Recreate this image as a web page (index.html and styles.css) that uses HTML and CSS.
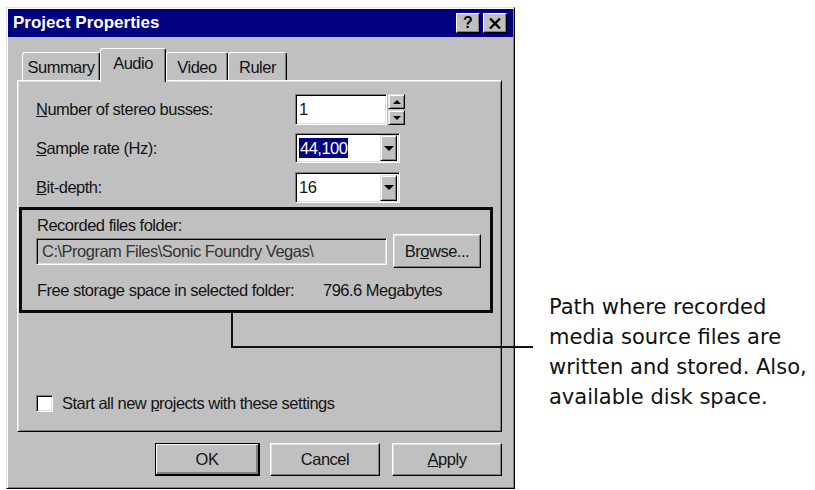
FILE: index.html
```html
<!DOCTYPE html>
<html>
<head>
<meta charset="utf-8">
<title>Project Properties</title>
<link rel="stylesheet" href="styles.css">
</head>
<body>
<div class="page">
  <div class="dialog">
    <div class="titlebar">
      <span class="title">Project Properties</span>
      <div class="tb-btns">
        <span class="tb-btn help">?</span>
        <span class="tb-btn close"><svg width="12" height="11" viewBox="0 0 12 11"><path d="M1 0.5 L11 10.5 M11 0.5 L1 10.5" stroke="#000" stroke-width="2.4"/></svg></span>
      </div>
    </div>
    <div class="tabs">
      <div class="tab">Summary</div>
      <div class="tab active">Audio</div>
      <div class="tab">Video</div>
      <div class="tab">Ruler</div>
    </div>
    <div class="panel">
      <div class="row r1">
        <span class="lbl"><u>N</u>umber of stereo busses:</span>
        <div class="field num"><span class="val">1</span></div>
        <div class="spin"><span class="spin-btn"><i class="tri up"></i></span><span class="spin-btn"><i class="tri down"></i></span></div>
      </div>
      <div class="row r2">
        <span class="lbl"><u>S</u>ample rate (Hz):</span>
        <div class="field combo"><span class="val sel">44,100</span><span class="drop"><i class="tri down big"></i></span></div>
      </div>
      <div class="row r3">
        <span class="lbl"><u>B</u>it-depth:</span>
        <div class="field combo"><span class="val">16</span><span class="drop"><i class="tri down big"></i></span></div>
      </div>
      <div class="group">
        <div class="g-label">Recorded files folder:</div>
        <div class="path-row">
          <div class="path">C:\Program Files\Sonic Foundry Vegas\</div>
          <div class="btn browse">Br<u>o</u>wse...</div>
        </div>
        <div class="free"><span class="free-lbl">Free storage space in selected folder:</span><span>796.6 Megabytes</span></div>
      </div>
      <div class="check-row">
        <span class="checkbox"></span>
        <span class="check-lbl">Start all new <u>p</u>rojects with these settings</span>
      </div>
    </div>
    <div class="buttons">
      <div class="btn ok default">OK</div>
      <div class="btn cancel">Cancel</div>
      <div class="btn apply"><u>A</u>pply</div>
    </div>
  </div>
  <div class="note">Path where recorded<br>media source files are<br>written and stored. Also,<br>available disk space.</div>
  <div class="callout"></div>
</div>
</body>
</html>
```
FILE: styles.css
```css
* { box-sizing: border-box; }
html, body { margin: 0; padding: 0; background: #fff; }
body { width: 815px; height: 490px; overflow: hidden; }

.page {
  position: relative;
  display: flex;
  align-items: flex-start;
  padding: 7px 0 0 6px;
  font-family: "Liberation Sans", Arial, sans-serif;
  font-size: 16.5px;
  letter-spacing: -0.5px;
  color: #141414;
}

.dialog {
  width: 509px;
  height: 482px;
  background: #c0c0c0;
  border: 1px solid;
  border-color: #dfdfdf #000 #000 #dfdfdf;
  box-shadow: inset 1px 1px #fff, inset -1px -1px #808080;
  padding: 1px;
  display: flex;
  flex-direction: column;
}

.titlebar {
  height: 28px;
  background: #000080;
  display: flex;
  align-items: center;
  justify-content: space-between;
  padding: 0 6px 0 5px;
}
.title {
  color: #fff;
  font-weight: bold;
  font-size: 17px;
  letter-spacing: 0;
}
.tb-btns { display: flex; gap: 3px; }
.tb-btn {
  width: 24px;
  height: 20px;
  background: #c0c0c0;
  border: 1px solid;
  border-color: #fff #000 #000 #fff;
  box-shadow: inset -1px -1px #808080;
  display: flex;
  align-items: center;
  justify-content: center;
  font-weight: bold;
  font-size: 16px;
  letter-spacing: 0;
  color: #000;
  line-height: 1;
}

.tabs {
  margin-top: 11px;
  height: 32px;
  padding-left: 14px;
  display: flex;
  align-items: flex-end;
  position: relative;
  z-index: 1;
}
.tab {
  height: 28px;
  border: 1px solid;
  border-color: #fff #000 transparent #fff;
  border-bottom: none;
  border-radius: 3px 3px 0 0;
  box-shadow: inset -1px 0 #808080;
  display: flex;
  align-items: center;
  justify-content: center;
  padding-top: 1px;
}
.tab:nth-child(1) { width: 78px; }
.tab:nth-child(3) { width: 62px; }
.tab:nth-child(4) { width: 59px; }
.tab.active {
  width: 66px;
  height: 34px;
  margin-bottom: -2px;
  background: #c0c0c0;
  padding-bottom: 6px;
}

.panel {
  margin-left: 9px;
  width: 485px;
  height: 352px;
  border: 1px solid;
  border-color: #fff #000 #000 #fff;
  box-shadow: inset 1px 1px #dfdfdf, inset -1px -1px #808080;
  padding: 13px 1px 1px 1px;
  display: flex;
  flex-direction: column;
}

.row {
  display: flex;
  align-items: center;
  margin-left: 17px;
}
.lbl { width: 259px; }
.r1 { height: 31px; }
.r2 { height: 30px; margin-top: 8px; }
.r3 { height: 31px; margin-top: 9px; }

.field {
  height: 100%;
  background: #fff;
  border: 1px solid;
  border-color: #808080 #fff #fff #808080;
  box-shadow: inset 1px 1px #000, inset -1px -1px #dfdfdf;
  display: flex;
  align-items: center;
  padding-left: 3px;
}
.field.num { width: 92px; }
.field.combo { width: 105px; padding-right: 2px; }
.val { flex: 1; line-height: 1; }
.sel {
  flex: none;
  background: #000080;
  color: #fff;
  padding: 2px 1px;
  margin-right: auto;
}

.spin {
  width: 17px;
  height: 100%;
  margin-left: 1px;
  display: flex;
  flex-direction: column;
  gap: 1px;
}
.spin-btn {
  flex: 1;
  background: #c0c0c0;
  border: 1px solid;
  border-color: #dfdfdf #000 #000 #dfdfdf;
  box-shadow: inset 1px 1px #fff, inset -1px -1px #808080;
  display: flex;
  align-items: center;
  justify-content: center;
}
.drop {
  width: 17px;
  height: 26px;
  margin-left: auto;
  background: #c0c0c0;
  border: 1px solid;
  border-color: #dfdfdf #000 #000 #dfdfdf;
  box-shadow: inset 1px 1px #fff, inset -1px -1px #808080;
  display: flex;
  align-items: center;
  justify-content: center;
}
.tri { display: block; width: 0; height: 0; border-left: 4px solid transparent; border-right: 4px solid transparent; }
.tri.up { border-bottom: 4px solid #000; }
.tri.down { border-top: 4px solid #000; }
.tri.big { border-left-width: 5px; border-right-width: 5px; border-top-width: 5px; }

.group {
  margin-top: 4px;
  width: 474px;
  height: 106px;
  border: 3px solid #0a0a0a;
  padding: 6px 0 0 15px;
}
.g-label { height: 18px; line-height: 18px; }
.path-row {
  height: 34px;
  display: flex;
  align-items: center;
}
.path {
  margin-left: -1px;
  width: 351px;
  height: 27px;
  background: #c0c0c0;
  border: 1px solid;
  border-color: #808080 #fff #fff #808080;
  box-shadow: inset 1px 1px #000, inset -1px -1px #dfdfdf;
  display: flex;
  align-items: center;
  padding-left: 5px;
  color: #333;
}
.btn {
  background: #c0c0c0;
  border: 1px solid;
  border-color: #fff #000 #000 #fff;
  box-shadow: inset -1px -1px #808080, inset 1px 1px #dfdfdf;
  display: flex;
  align-items: center;
  justify-content: center;
}
.browse { margin-left: 6px; width: 88px; height: 34px; }
.free { margin-top: 13px; height: 18px; line-height: 18px; display: flex; }
.free-lbl { width: 286px; }

.check-row {
  margin-top: auto;
  margin-bottom: 18px;
  margin-left: 17px;
  height: 18px;
  display: flex;
  align-items: center;
}
.checkbox {
  width: 17px;
  height: 17px;
  background: #fff;
  border: 1px solid;
  border-color: #808080 #fff #fff #808080;
  box-shadow: inset 1px 1px #000, inset -1px -1px #dfdfdf;
}
.check-lbl { margin-left: 9px; }

.buttons {
  margin-top: 11px;
  height: 33px;
  display: flex;
  justify-content: flex-end;
  padding-right: 11px;
}
.buttons .btn { height: 33px; }
.ok { width: 105px; border-color: #000; box-shadow: inset 1px 1px #fff, inset -2px -2px #808080; border-width: 1px 2px 2px 1px; }
.cancel { width: 110px; margin-left: 10px; }
.apply { width: 110px; margin-left: 12px; }

.note {
  margin: 285px 0 0 34px;
  font-family: "DejaVu Sans", Verdana, sans-serif;
  font-size: 21px;
  letter-spacing: 0;
  line-height: 30px;
  color: #111;
  white-space: nowrap;
}

.callout {
  position: absolute;
  left: 231px;
  top: 313px;
  width: 302px;
  height: 35px;
  border-left: 2px solid #111;
  border-bottom: 2px solid #111;
}
```
